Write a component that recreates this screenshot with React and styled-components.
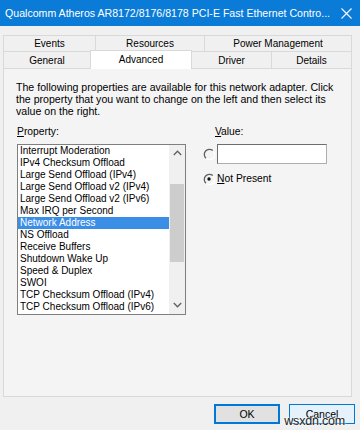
import React from 'react';
import styled, { createGlobalStyle } from 'styled-components';

const GlobalStyle = createGlobalStyle`
  html, body {
    margin: 0;
    padding: 0;
    background: #f0f0f0;
  }
  body {
    font-family: "Liberation Sans", Arial, sans-serif;
    color: #000;
  }
`;

const Window = styled.div`
  width: 360px;
  height: 430px;
  display: flex;
  flex-direction: column;
  background: #f0f0f0;
  overflow: hidden;
`;

const TitleBar = styled.div`
  height: 26px;
  background: #0a7bd6;
  color: #fff;
  display: flex;
  align-items: center;
  padding: 0 0 0 5px;
  font-size: 10.6px;
  flex-shrink: 0;
`;

const TitleText = styled.div`
  flex: 1;
  white-space: nowrap;
  overflow: hidden;
`;

const CloseBox = styled.div`
  width: 26px;
  height: 26px;
  display: flex;
  align-items: center;
  justify-content: center;
  margin-right: 1px;
`;

const Body = styled.div`
  padding: 9px 8px 0 3px;
  display: flex;
  flex-direction: column;
`;

const TabRow = styled.div`
  display: flex;
  height: ${p => p.$h}px;
  align-items: flex-end;
`;

const Tab = styled.div`
  width: ${p => p.$w}px;
  height: ${p => (p.$active ? p.$h + 2 : p.$h)}px;
  box-sizing: border-box;
  border: 1px solid #d9d9d9;
  border-bottom: none;
  margin-left: ${p => (p.$first ? 0 : -1)}px;
  background: ${p => (p.$active ? '#ffffff' : '#f0f0f0')};
  margin-bottom: ${p => (p.$active ? -1 : 0)}px;
  display: flex;
  align-items: center;
  justify-content: center;
  font-size: 10px;
  position: relative;
  z-index: ${p => (p.$active ? 2 : 1)};
  padding-bottom: ${p => (p.$active ? 2 : 0)}px;
`;

const Panel = styled.div`
  width: 349px;
  height: 329px;
  box-sizing: border-box;
  border: 1px solid #d9d9d9;
  background: #f4f4f4;
  padding: 12px 0 0 12px;
  display: flex;
  flex-direction: column;
`;

const Description = styled.div`
  font-size: 10.6px;
  line-height: 12.2px;
  white-space: nowrap;
`;

const Columns = styled.div`
  display: flex;
  margin-top: 8px;
`;

const LeftCol = styled.div`
  display: flex;
  flex-direction: column;
  width: 169px;
  margin-left: 1px;
`;

const RightCol = styled.div`
  display: flex;
  flex-direction: column;
  margin-left: 17px;
`;

const Label = styled.div`
  font-size: 10.3px;
  line-height: 12px;
  height: 12px;
  margin-left: ${p => p.$indent || 0}px;
  u { text-decoration: underline; }
`;

const ListBox = styled.div`
  margin-top: 6px;
  width: 169px;
  height: 171px;
  box-sizing: border-box;
  border: 1px solid #7f7f7f;
  background: #fff;
  display: flex;
`;

const Items = styled.div`
  flex: 1;
  display: flex;
  flex-direction: column;
`;

const Item = styled.div`
  height: 12px;
  line-height: 12px;
  font-size: 10px;
  padding-left: 2px;
  white-space: nowrap;
  background: ${p => (p.$selected ? '#3a8ee6' : 'transparent')};
  color: ${p => (p.$selected ? '#fff' : '#000')};
`;

const ScrollBar = styled.div`
  width: 16px;
  background: #f0f0f0;
  display: flex;
  flex-direction: column;
`;

const Arrow = styled.div`
  height: 17px;
  display: flex;
  align-items: center;
  justify-content: center;
`;

const Track = styled.div`
  flex: 1;
  padding: 22px 1px 0 1px;
`;

const Thumb = styled.div`
  height: 78px;
  background: #cdcdcd;
`;

const RadioRow = styled.div`
  display: flex;
  align-items: center;
  margin-top: ${p => p.$mt}px;
`;

const RadioMark = styled.div`
  width: 12px;
  height: 12px;
  display: flex;
`;

const TextBox = styled.div`
  width: 110px;
  height: 20px;
  box-sizing: border-box;
  margin-left: 2px;
  background: #fff;
  border: 1px solid #adadad;
  border-top-color: #6d6d6d;
  border-left-color: #6d6d6d;
`;

const RadioText = styled.div`
  font-size: 10.3px;
  margin-left: 2px;
  u { text-decoration: underline; }
`;

const ButtonBar = styled.div`
  display: flex;
  justify-content: flex-end;
  gap: 9px;
  padding: 7px 0 0 0;
  margin-right: -3px;
  position: relative;
`;

const Button = styled.div`
  width: 66px;
  height: 20px;
  box-sizing: border-box;
  border: 1px solid #0078d7;
  background: ${p => (p.$hover ? '#e5f1fb' : '#e1e1e1')};
  box-shadow: ${p => (p.$default ? 'inset 0 0 0 1px #0078d7' : 'none')};
  display: flex;
  align-items: center;
  justify-content: center;
  font-size: 10.5px;
`;

const Watermark = styled.div`
  position: absolute;
  right: 10px;
  top: 17px;
  font-size: 12.5px;
  color: #222;
  letter-spacing: -0.2px;
  text-shadow: 0 0 2px #fff, 0 0 2px #fff;
`;

const Radio = ({ checked }) => (
  <RadioMark>
    <svg width="12" height="12" viewBox="0 0 12 12">
      <path d="M3 10.2 A4.6 4.6 0 0 1 9.8 2.6" fill="none" stroke="#606060" strokeWidth="1.3" />
      <path d="M10 3 A4.6 4.6 0 0 1 3.4 10.4" fill="none" stroke="#ffffff" strokeWidth="1.2" />
      {checked && <circle cx="6" cy="6" r="1.7" fill="#111" />}
    </svg>
  </RadioMark>
);

const properties = [
  'Interrupt Moderation',
  'IPv4 Checksum Offload',
  'Large Send Offload (IPv4)',
  'Large Send Offload v2 (IPv4)',
  'Large Send Offload v2 (IPv6)',
  'Max IRQ per Second',
  'Network Address',
  'NS Offload',
  'Receive Buffers',
  'Shutdown Wake Up',
  'Speed & Duplex',
  'SWOI',
  'TCP Checksum Offload (IPv4)',
  'TCP Checksum Offload (IPv6)',
];

const topTabs = [
  { name: 'Events', w: 93 },
  { name: 'Resources', w: 110 },
  { name: 'Power Management', w: 148 },
];

const bottomTabs = [
  { name: 'General', w: 88 },
  { name: 'Advanced', w: 102, active: true },
  { name: 'Driver', w: 81 },
  { name: 'Details', w: 81 },
];

const App = () => {
  const selected = 'Network Address';

  return (
    <>
      <GlobalStyle />
      <Window>
        <TitleBar>
          <TitleText>Qualcomm Atheros AR8172/8176/8178 PCI-E Fast Ethernet Contro...</TitleText>
          <CloseBox>
            <svg width="11" height="11" viewBox="0 0 11 11">
              <path d="M0.5 0.5 L10.5 10.5 M10.5 0.5 L0.5 10.5" stroke="#fff" strokeWidth="1.1" />
            </svg>
          </CloseBox>
        </TitleBar>
        <Body>
          <TabRow $h={16}>
            {topTabs.map((t, i) => (
              <Tab key={t.name} $w={t.w} $h={16} $first={i === 0}>{t.name}</Tab>
            ))}
          </TabRow>
          <TabRow $h={17}>
            {bottomTabs.map((t, i) => (
              <Tab key={t.name} $w={t.w} $h={17} $first={i === 0} $active={t.active}>{t.name}</Tab>
            ))}
          </TabRow>
          <Panel>
            <Description>
              The following properties are available for this network adapter. Click<br />
              the property that you want to change on the left and then select its<br />
              value on the right.
            </Description>
            <Columns>
              <LeftCol>
                <Label><u>P</u>roperty:</Label>
                <ListBox>
                  <Items>
                    {properties.map(p => (
                      <Item key={p} $selected={p === selected}>{p}</Item>
                    ))}
                  </Items>
                  <ScrollBar>
                    <Arrow>
                      <svg width="9" height="6" viewBox="0 0 9 6">
                        <polyline points="0.8,5 4.5,1.2 8.2,5" fill="none" stroke="#606060" strokeWidth="1.3" />
                      </svg>
                    </Arrow>
                    <Track><Thumb /></Track>
                    <Arrow>
                      <svg width="9" height="6" viewBox="0 0 9 6">
                        <polyline points="0.8,1 4.5,4.8 8.2,1" fill="none" stroke="#606060" strokeWidth="1.3" />
                      </svg>
                    </Arrow>
                  </ScrollBar>
                </ListBox>
              </LeftCol>
              <RightCol>
                <Label $indent={12}><u>V</u>alue:</Label>
                <RadioRow $mt={6}>
                  <Radio />
                  <TextBox />
                </RadioRow>
                <RadioRow $mt={9}>
                  <Radio checked />
                  <RadioText><u>N</u>ot Present</RadioText>
                </RadioRow>
              </RightCol>
            </Columns>
          </Panel>
          <ButtonBar>
            <Button $default>OK</Button>
            <Button $hover>Cancel</Button>
            <Watermark>wsxdn.com</Watermark>
          </ButtonBar>
        </Body>
      </Window>
    </>
  );
};

export default App;
